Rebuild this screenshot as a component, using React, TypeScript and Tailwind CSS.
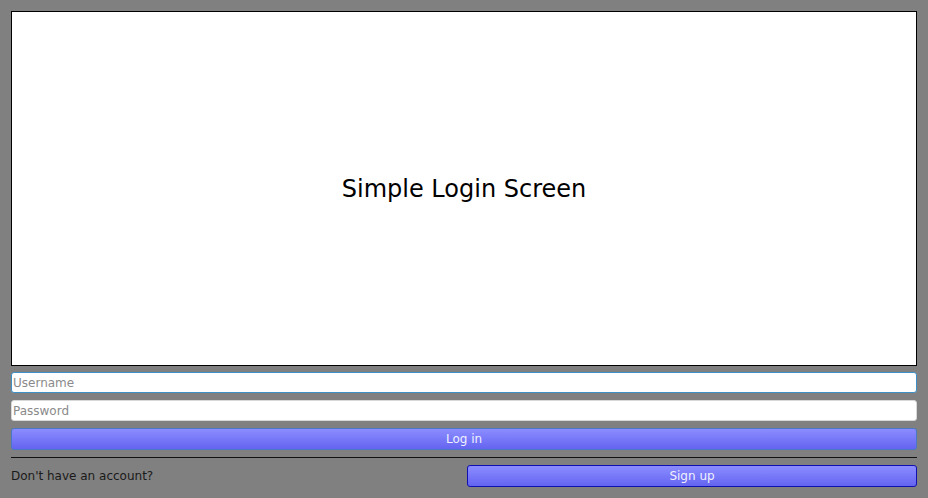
import React from "react";

export default function App() {
  const font = { fontFamily: '"DejaVu Sans", sans-serif' };
  return (
    <div
      className="flex h-[498px] w-[928px] flex-col bg-[#808080] p-[11px]"
      style={font}
    >
      <div className="flex flex-1 items-center justify-center border border-black bg-white">
        <span className="text-[24px] text-black">Simple Login Screen</span>
      </div>
      <input
        autoFocus
        placeholder="Username"
        className="mt-[6px] h-[21px] w-full rounded-[3px] border border-[#3d8fc6] bg-white px-[1px] text-[12px] text-black outline-none placeholder:text-[#8a8a8a]"
      />
      <input
        placeholder="Password"
        type="password"
        className="mt-[7px] h-[21px] w-full rounded-[3px] border border-[#d8d8d8] bg-white px-[1px] text-[12px] text-black outline-none placeholder:text-[#8a8a8a]"
      />
      <button className="mt-[7px] h-[22px] w-full rounded-[3px] border border-[#4a78c6] bg-gradient-to-b from-[#8c8cff] to-[#6464f0] text-[12px] text-[#f0f0ff]">
        Log in
      </button>
      <div className="mt-[7px] h-px w-full bg-[#111]" />
      <div className="mt-[7px] flex h-[22px] items-center">
        <span className="flex-1 text-[12px] text-[#1a1a1a]">Don't have an account?</span>
        <button className="h-[22px] w-[450px] rounded-[3px] border border-[#1010b0] bg-gradient-to-b from-[#8c8cff] to-[#6464f0] text-[12px] text-[#f0f0ff]">
          Sign up
        </button>
      </div>
    </div>
  );
}
